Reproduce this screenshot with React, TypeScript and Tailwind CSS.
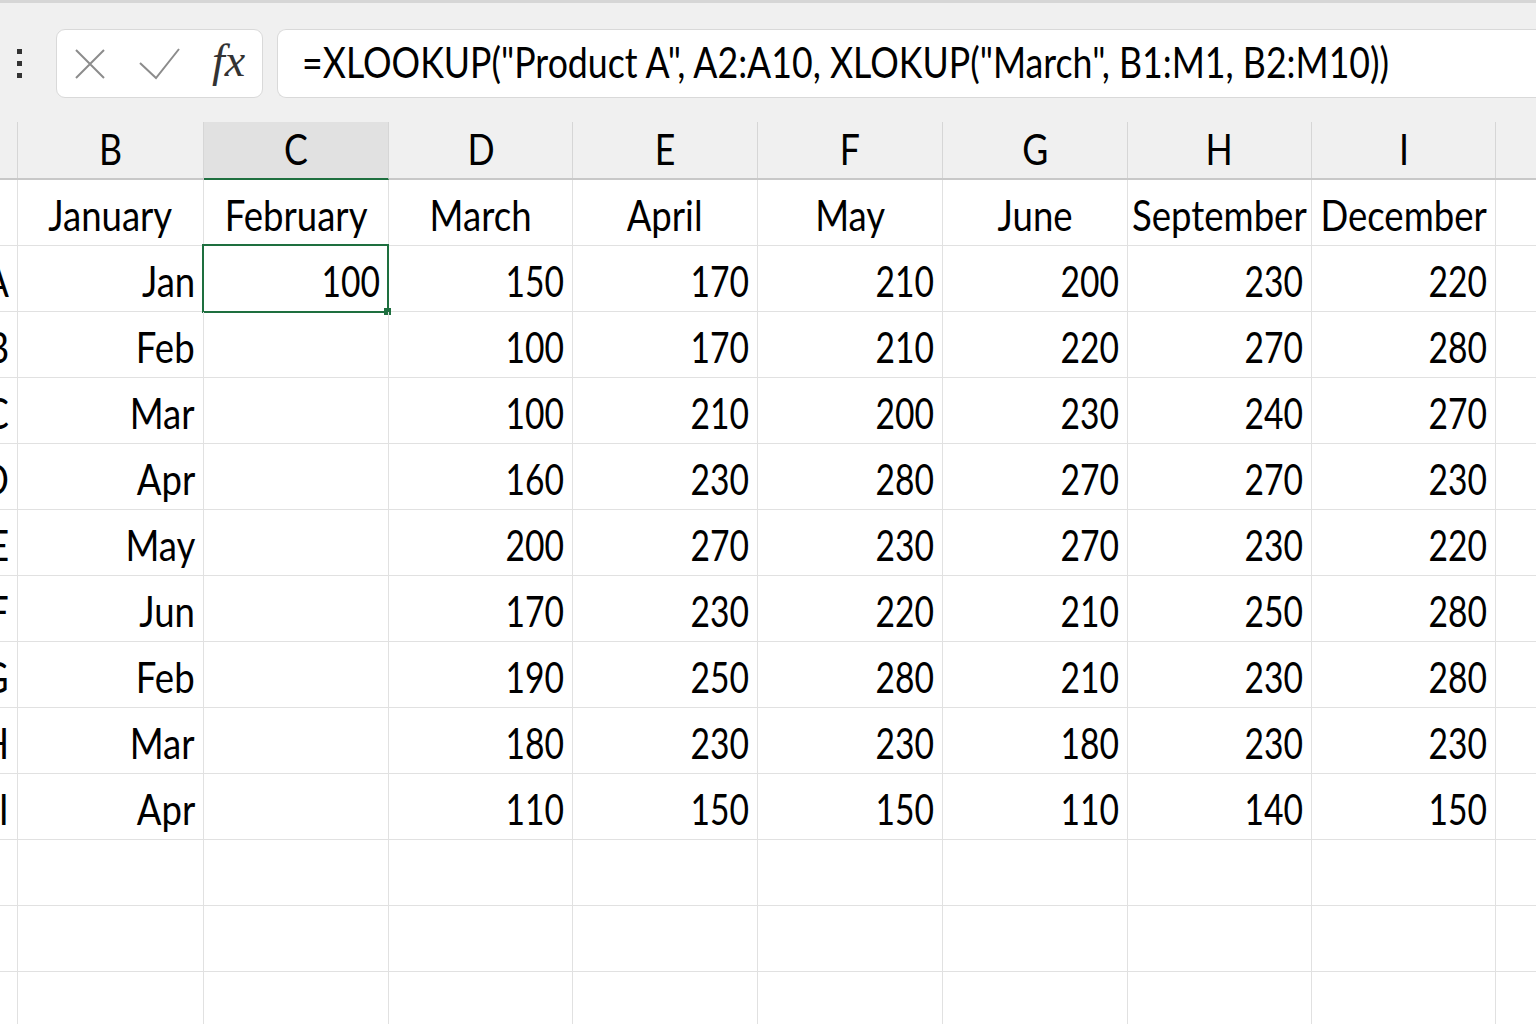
import React from "react";

const months = ["January", "February", "March", "April", "May", "June", "September", "December"];

const rows: [string, string, string, number[]][] = [
  ["Product A", "Jan", "100", [150, 170, 210, 200, 230, 220]],
  ["Product B", "Feb", "", [100, 170, 210, 220, 270, 280]],
  ["Product C", "Mar", "", [100, 210, 200, 230, 240, 270]],
  ["Product D", "Apr", "", [160, 230, 280, 270, 270, 230]],
  ["Product E", "May", "", [200, 270, 230, 270, 230, 220]],
  ["Product F", "Jun", "", [170, 230, 220, 210, 250, 280]],
  ["Product G", "Feb", "", [190, 250, 280, 210, 230, 280]],
  ["Product H", "Mar", "", [180, 230, 230, 180, 230, 230]],
  ["Product I", "Apr", "", [110, 150, 150, 110, 140, 150]],
];

// widths of columns B..I, the last column fills the rest
const widths = ["w-[186px]", "w-[185px]", "w-[184px]", "w-[185px]", "w-[185px]", "w-[185px]", "w-[184px]", "w-[184px]"];
const letters = ["B", "C", "D", "E", "F", "G", "H", "I"];

const App = () => {
  return (
    <div className="w-[1536px] h-[1024px] overflow-hidden bg-white font-['Lato','Noto_Sans',sans-serif] text-[42px] text-black">
      {/* formula bar */}
      <div className="h-[122px] bg-[#f0f0f0] border-t-[3px] border-[#d6d6d6] flex flex-row items-start pt-[26px]">
        <div className="w-[56px] shrink-0 h-[69px] flex flex-col items-center justify-center gap-[7px] pr-[18px]">
          <div className="w-[5px] h-[5px] bg-[#333]" />
          <div className="w-[5px] h-[5px] bg-[#333]" />
          <div className="w-[5px] h-[5px] bg-[#333]" />
        </div>
        <div className="w-[207px] shrink-0 h-[69px] bg-white border border-[#d9d9d9] rounded-[9px] flex flex-row items-center pl-[18px]">
          <svg width="30" height="32" viewBox="0 0 30 32" className="shrink-0 text-[#8c8c8c]">
            <path d="M1 2 L29 30 M29 2 L1 30" stroke="currentColor" strokeWidth="2" fill="none" />
          </svg>
          <svg width="42" height="32" viewBox="0 0 42 32" className="shrink-0 ml-[34px] text-[#8c8c8c]">
            <path d="M1 15 L17 30 L40 1" stroke="currentColor" strokeWidth="2" fill="none" />
          </svg>
          <div className="ml-[31px] font-['Liberation_Serif',serif] italic text-[46px] text-[#333] leading-none pb-[6px]">
            fx
          </div>
        </div>
        <div className="ml-[14px] flex-1 min-w-0 overflow-hidden h-[69px] bg-white border border-r-0 border-[#d9d9d9] rounded-l-[9px] flex flex-row items-center pl-[24px] pb-[2px]">
          <span className="inline-block whitespace-nowrap origin-left scale-x-85">
            =XLOOKUP("Product A", A2:A10, XLOKUP("March", B1:M1, B2:M10))
          </span>
        </div>
      </div>

      {/* sheet */}
      <div className="-ml-[170px] flex flex-col">
        {/* column headers */}
        <div className="h-[58px] flex flex-row bg-[#f0f0f0] border-b-2 border-[#c8c8c8]">
          <div className="w-[188px] shrink-0 border-r border-[#d6d6d6]" />
          {letters.map((l, i) => (
            <div
              key={l}
              className={
                l === "C"
                  ? `${widths[i]} shrink-0 bg-[#e1e1e1] border-r border-b-2 -mb-[2px] border-[#d6d6d6] border-b-[#1e6f3f] flex items-center justify-center pb-[2px]`
                  : `${widths[i]} shrink-0 border-r border-[#d6d6d6] flex items-center justify-center pb-[2px]`
              }
            >
              <span className="inline-block scale-x-85">{l}</span>
            </div>
          ))}
          <div className="flex-1" />
        </div>

        {/* month names */}
        <Row a="">
          {months.map((m, i) => (
            <Cell key={m} w={widths[i]} align="center" word>
              {m}
            </Cell>
          ))}
        </Row>

        {rows.map(([a, b, c, nums], r) => (
          <Row key={a} a={a}>
            <Cell w={widths[0]} align="right" word>
              {b}
            </Cell>
            <Cell w={widths[1]} align="right" selected={r === 0}>
              {c}
            </Cell>
            {nums.map((n, i) => (
              <Cell key={i} w={widths[i + 2]} align="right">
                {n}
              </Cell>
            ))}
          </Row>
        ))}

        <Row a="">
          {widths.map((w, i) => (
            <Cell key={i} w={w} align="right" />
          ))}
        </Row>
        <Row a="">
          {widths.map((w, i) => (
            <Cell key={i} w={w} align="right" />
          ))}
        </Row>
        <Row a="">
          {widths.map((w, i) => (
            <Cell key={i} w={w} align="right" />
          ))}
        </Row>
      </div>
    </div>
  );
};

export default App;

const Row = ({ a, children }: { a: string; children?: React.ReactNode }) => {
  return (
    <div className="h-[66px] flex flex-row border-b border-[#e1e1e1]">
      <div className="w-[188px] shrink-0 border-r border-[#e1e1e1] flex items-center justify-end pr-[8px] pt-[6px]">
        <span className="inline-block whitespace-nowrap origin-right scale-x-85">{a}</span>
      </div>
      {children}
      <div className="flex-1" />
    </div>
  );
};

const Cell = ({
  w,
  align,
  word,
  selected,
  children,
}: {
  w: string;
  align: "right" | "center";
  word?: boolean;
  selected?: boolean;
  children?: React.ReactNode;
}) => {
  // words are drawn a little wider than digits
  const squeeze = word ? "scale-x-87" : "scale-x-80";
  return (
    <div
      className={
        align === "right"
          ? `${w} shrink-0 relative border-r border-[#e1e1e1] flex items-center justify-end pr-[8px] pt-[6px]`
          : `${w} shrink-0 relative border-r border-[#e1e1e1] flex items-center justify-center pt-[6px]`
      }
    >
      <span
        className={
          align === "right"
            ? `inline-block whitespace-nowrap origin-right ${squeeze}`
            : `inline-block whitespace-nowrap origin-center ${squeeze}`
        }
      >
        {children}
      </span>
      {selected && (
        <div className="absolute -top-[2px] -left-[2px] -right-[1px] -bottom-[2px] border-2 border-[#1e6f3f]">
          <div className="absolute -right-[4px] -bottom-[4px] w-[7px] h-[7px] bg-[#1e6f3f]" />
        </div>
      )}
    </div>
  );
};
